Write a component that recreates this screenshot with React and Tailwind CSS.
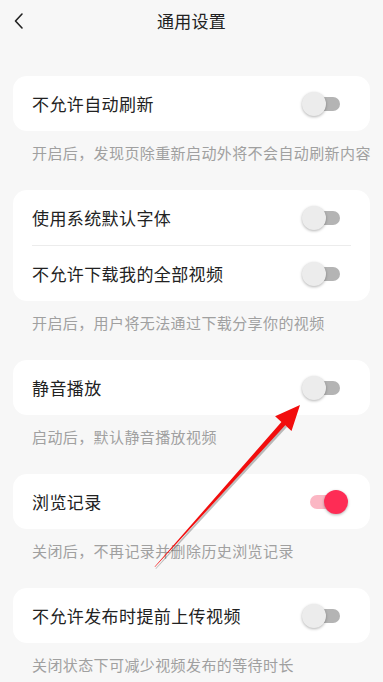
const Toggle = ({ on }) => {
  return (
    <div className="relative w-[46px] h-[24px] shrink-0">
      <div className={`absolute left-[8px] top-[5px] w-[30px] h-[14px] rounded-full ${on ? "bg-[#fbb7c4]" : "bg-[#b4b4b4]"}`} />
      <div
        className={`absolute top-0 w-[24px] h-[24px] rounded-full shadow-[0_1px_3px_rgba(0,0,0,0.3)] ${on ? "left-[22px] bg-[#fe2c55]" : "left-0 bg-[#ececec]"}`}
      />
    </div>
  )
}

const Row = ({ label, on }) => (
  <div className="h-[55px] flex items-center justify-between pl-[19px] pr-[22px]">
    <span className="text-[17px] tracking-[0.4px] text-[#222]">{label}</span>
    <Toggle on={on} />
  </div>
)

const Desc = ({ children }) => (
  <p className="pt-[11px] pb-[26px] px-[32px] text-[15px] leading-[22px] tracking-[0.4px] text-[#a0a0a0] whitespace-nowrap">
    {children}
  </p>
)

const Card = ({ children }) => (
  <div className="mx-[13px] bg-white rounded-[14px]">{children}</div>
)

export default function App() {
  return (
    <div
      className="relative w-[383px] h-[682px] overflow-hidden bg-[#f7f7f7]"
      style={{ fontFamily: '"Noto Sans CJK SC", "Noto Sans", sans-serif' }}
    >
      <div className="relative h-[42px] flex items-center justify-center">
        <svg className="absolute left-[12px] top-[11px]" width="14" height="20" viewBox="0 0 14 20">
          <path d="M10 3 L3.5 10 L10 17" fill="none" stroke="#222" strokeWidth="1.6" strokeLinecap="round" strokeLinejoin="round" />
        </svg>
        <span className="text-[17px] tracking-[0.3px] text-[#222]">通用设置</span>
      </div>

      <div className="pt-[34px]">
        <Card>
          <Row label="不允许自动刷新" />
        </Card>
        <Desc>开启后，发现页除重新启动外将不会自动刷新内容</Desc>

        <Card>
          <Row label="使用系统默认字体" />
          <div className="mx-[19px] h-px bg-[#ececec]" />
          <Row label="不允许下载我的全部视频" />
        </Card>
        <Desc>开启后，用户将无法通过下载分享你的视频</Desc>

        <Card>
          <Row label="静音播放" />
        </Card>
        <Desc>启动后，默认静音播放视频</Desc>

        <Card>
          <Row label="浏览记录" on />
        </Card>
        <Desc>关闭后，不再记录并删除历史浏览记录</Desc>

        <Card>
          <Row label="不允许发布时提前上传视频" />
        </Card>
        <Desc>关闭状态下可减少视频发布的等待时长</Desc>
      </div>

      <svg className="absolute left-0 top-0 pointer-events-none" width="383" height="682" viewBox="0 0 383 682">
        <polygon
          points="156,569 287,427 283.5,424 155.5,568.5"
          fill="rgba(0,0,0,0.25)"
        />
        <polygon
          points="155,567 285.2,425.3 291.5,430.9 300,405 275.1,416.3 281.4,421.9 154.6,566.7"
          fill="#f20d0d"
        />
      </svg>
    </div>
  )
}
